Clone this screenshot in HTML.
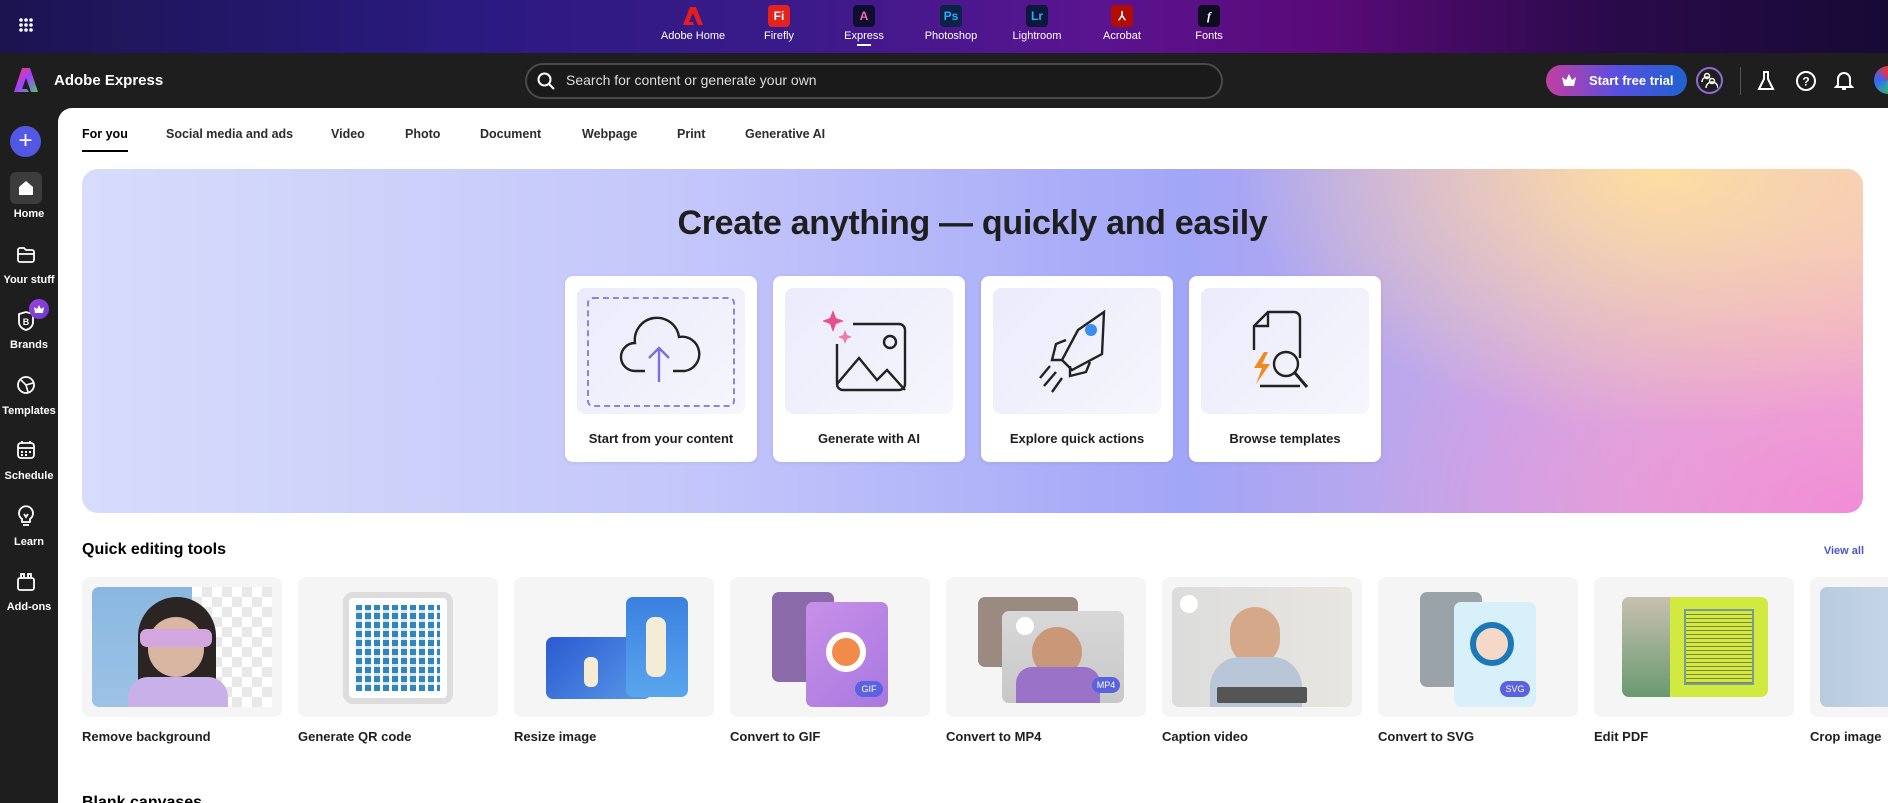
<!DOCTYPE html>
<html style="overflow:hidden;width:1888px;height:803px"><head><meta charset="utf-8"><style>
*{box-sizing:border-box;margin:0;padding:0}
body{width:1888px;height:803px;overflow:hidden;background:#1e1e1e;font-family:"Liberation Sans",sans-serif;position:relative}
.top{position:absolute;left:0;top:0;width:1888px;height:53px;background:linear-gradient(90deg,#1b1450 0%,#2a1a80 25%,#3b1a8a 42%,#5a1490 58%,#5a0a78 70%,#2a0a4a 85%,#170a35 100%)}
.app{position:absolute;top:5px;width:80px;text-align:center;color:#fff;font-size:11px}
.app .ic{width:22px;height:22px;margin:0 auto 3px;border-radius:4px;font-size:12px;font-weight:bold;line-height:22px}
.hdr{position:absolute;top:53px;left:0;width:1888px;height:55px;background:#1e1e1e}
.side{position:absolute;left:0;top:108px;width:58px;bottom:0}
.si{position:absolute;left:0;width:58px;text-align:center;color:#fff;font-size:11px;font-weight:bold}
.main{position:absolute;left:58px;top:108px;right:0;bottom:0;background:#fff;border-top-left-radius:14px;overflow:hidden}
.tab{position:absolute;top:19px;font-size:12.5px;color:#2c2c2c;font-weight:bold}
.hero{position:absolute;left:24px;top:61px;width:1781px;height:344px;border-radius:16px;overflow:hidden;
background:radial-gradient(ellipse 420px 260px at 1580px 0px,rgba(255,222,160,1),rgba(255,222,160,0) 100%),
radial-gradient(ellipse 500px 300px at 1781px 344px,rgba(240,140,216,1),rgba(240,140,216,0) 100%),
linear-gradient(90deg,#d7dcfb 0%,#c3c6fa 35%,#a2a6f7 62%,#c8a8e8 80%,#f0c0c8 100%)}
.card{position:absolute;top:107px;width:192px;height:186px;background:#fff;border-radius:8px;box-shadow:0 1px 4px rgba(0,0,0,.08)}
.card .im{position:absolute;left:12px;top:12px;width:168px;height:126px;border-radius:8px;background:linear-gradient(135deg,#ebebfb,#f6f6fd)}
.card .lb{position:absolute;left:0;right:0;top:155px;text-align:center;font-size:13px;font-weight:bold;color:#1e1e1e}
.tool{position:absolute;top:469px;width:200px}
.tool .bx{height:140px;background:#f5f5f5;border-radius:8px;position:relative;overflow:hidden}
.tool .lb{margin-top:12px;font-size:13px;font-weight:bold;color:#1e1e1e}
.pic{position:absolute;border-radius:7px}
</style></head><body>
<div class="top">
 <svg style="position:absolute;left:18px;top:17px" width="16" height="16"><g fill="#fff"><circle cx="3" cy="3" r="1.8"/><circle cx="8" cy="3" r="1.8"/><circle cx="13" cy="3" r="1.8"/><circle cx="3" cy="8" r="1.8"/><circle cx="8" cy="8" r="1.8"/><circle cx="13" cy="8" r="1.8"/><circle cx="3" cy="13" r="1.8"/><circle cx="8" cy="13" r="1.8"/><circle cx="13" cy="13" r="1.8"/></g></svg>
 <div class="app" style="left:653px"><div class="ic"><svg width="22" height="22"><path d="M8 2h6l7 18h-5L11 8 7 17h4l1 3H1z" fill="#e61d1d"/></svg></div>Adobe Home</div>
 <div class="app" style="left:739px"><div class="ic" style="background:#e4221e;color:#fff">Fi</div>Firefly</div>
 <div class="app" style="left:824px"><div class="ic" style="background:#0d0f2e;color:#f6a">A</div>Express<div style="width:14px;height:2px;background:#fff;margin:2px auto 0"></div></div>
 <div class="app" style="left:911px"><div class="ic" style="background:#0a2346;color:#31a8ff">Ps</div>Photoshop</div>
 <div class="app" style="left:997px"><div class="ic" style="background:#0b1a3a;color:#31a8ff">Lr</div>Lightroom</div>
 <div class="app" style="left:1082px"><div class="ic" style="background:#b30b00;color:#fff">⅄</div>Acrobat</div>
 <div class="app" style="left:1169px"><div class="ic" style="background:#0d0d20;color:#fff;font-style:italic;font-family:'Liberation Serif',serif">f</div>Fonts</div>
</div>
<div class="hdr">
 <svg style="position:absolute;left:13px;top:14px" width="26" height="26"><defs><linearGradient id="lg" x1="0" y1="0" x2="1" y2="1"><stop offset="0" stop-color="#ff3d5a"/><stop offset=".5" stop-color="#a040ff"/><stop offset="1" stop-color="#4cc86a"/></linearGradient></defs><path d="M9 1h8l8 24h-7l-5-14-4 11h5l2 3H1z" fill="url(#lg)"/></svg>
 <div style="position:absolute;left:54px;top:19px;color:#fff;font-size:15px;font-weight:bold">Adobe Express</div>
 <div style="position:absolute;left:525px;top:10px;width:698px;height:36px;border:2px solid #4a4a4a;border-radius:18px;background:#1a1a1a"></div>
 <svg style="position:absolute;left:537px;top:19px" width="18" height="18"><circle cx="7.5" cy="7.5" r="6" stroke="#fff" stroke-width="2" fill="none"/><path d="M12 12l5 5" stroke="#fff" stroke-width="2"/></svg>
 <div style="position:absolute;left:566px;top:19px;color:#ddd;font-size:14px">Search for content or generate your own</div>
 <div style="position:absolute;left:1546px;top:12px;width:141px;height:31px;border-radius:16px;background:linear-gradient(90deg,#c23fa0,#5a4ee0 50%,#1e62d0);color:#fff;font-size:13px;font-weight:bold;line-height:31px;padding-left:43px">Start free trial</div>
 <svg style="position:absolute;left:1561px;top:20px" width="16" height="14"><path d="M1 4l4 3 3-6 3 6 4-3-2 9H3z" fill="#fff"/></svg>
 <div style="position:absolute;left:1696px;top:14px;width:27px;height:27px;border-radius:50%;border:2px solid #8f6ad8"></div>
 <svg style="position:absolute;left:1701px;top:19px" width="17" height="17"><circle cx="6" cy="4" r="2.5" stroke="#fff" stroke-width="1.4" fill="none"/><circle cx="11" cy="9" r="2.5" stroke="#fff" stroke-width="1.4" fill="none"/><path d="M5 16a6 6 0 0112 0M1 10a5 5 0 018-4" stroke="#fff" stroke-width="1.4" fill="none"/></svg>
 <div style="position:absolute;left:1740px;top:14px;width:1px;height:28px;background:#555"></div>
 <svg style="position:absolute;left:1756px;top:17px" width="20" height="22"><path d="M7 2h6M8 2v7l-5 10h14l-5-10V2" stroke="#fff" stroke-width="2" fill="none"/></svg>
 <svg style="position:absolute;left:1795px;top:17px" width="22" height="22"><circle cx="11" cy="11" r="9" stroke="#fff" stroke-width="2" fill="none"/><text x="11" y="15.5" fill="#fff" font-size="12" font-weight="bold" text-anchor="middle" font-family="Liberation Sans">?</text></svg>
 <svg style="position:absolute;left:1834px;top:16px" width="20" height="22"><path d="M4 16V10a6 6 0 0112 0v6l2 2H2zM8 20h4" stroke="#fff" stroke-width="2" fill="none"/></svg>
 <div style="position:absolute;left:1874px;top:13px;width:28px;height:28px;border-radius:50%;background:conic-gradient(#e33,#f90,#3a8,#36f,#e33)"></div>
</div>
<div class="side">
 <div style="position:absolute;left:10px;top:18px;width:31px;height:31px;border-radius:50%;background:#5258e4;color:#fff;font-size:24px;line-height:29px;text-align:center">+</div>
 <div style="position:absolute;left:10px;top:64px;width:32px;height:32px;border-radius:6px;background:#3c3c3c"></div>
 <svg style="position:absolute;left:16px;top:70px" width="20" height="20"><path d="M3 9l7-6 7 6v8H3z" fill="#fff"/></svg>
 <div class="si" style="top:100px">Home</div>
 <svg style="position:absolute;left:16px;top:137px" width="20" height="20"><path d="M2 5a2 2 0 012-2h4l2 2h6a2 2 0 012 2v8a2 2 0 01-2 2H4a2 2 0 01-2-2zM2 9h16" stroke="#fff" stroke-width="1.8" fill="none"/></svg>
 <div class="si" style="top:166px">Your stuff</div>
 <svg style="position:absolute;left:16px;top:202px" width="20" height="22"><path d="M3 4l7-2 7 2v8c0 4-3 7-7 8-4-1-7-4-7-8z" stroke="#fff" stroke-width="1.8" fill="none"/><text x="10" y="15" fill="#fff" font-size="9" font-weight="bold" text-anchor="middle" font-family="Liberation Sans">B</text></svg>
 <div style="position:absolute;left:29px;top:191px;width:20px;height:20px;border-radius:50%;background:linear-gradient(135deg,#a040e0,#6a3ad0)"></div>
 <svg style="position:absolute;left:33px;top:196px" width="12" height="10"><path d="M1 3l3 2 2-4 2 4 3-2-1 6H2z" fill="#fff"/></svg>
 <div class="si" style="top:231px">Brands</div>
 <svg style="position:absolute;left:16px;top:267px" width="20" height="20"><circle cx="10" cy="10" r="8" stroke="#fff" stroke-width="1.8" fill="none"/><path d="M5 5l5 5 2 7M10 10l7-2" stroke="#fff" stroke-width="1.6" fill="none"/></svg>
 <div class="si" style="top:297px">Templates</div>
 <svg style="position:absolute;left:16px;top:332px" width="20" height="20"><rect x="2" y="3" width="16" height="15" rx="3" stroke="#fff" stroke-width="1.8" fill="none"/><path d="M2 8h16M6 1v3M14 1v3" stroke="#fff" stroke-width="1.8"/><g fill="#fff"><rect x="5" y="11" width="2" height="2"/><rect x="9" y="11" width="2" height="2"/><rect x="13" y="11" width="2" height="2"/><rect x="5" y="14" width="2" height="2"/><rect x="9" y="14" width="2" height="2"/></g></svg>
 <div class="si" style="top:362px">Schedule</div>
 <svg style="position:absolute;left:16px;top:397px" width="20" height="22"><path d="M6 14a7 7 0 118 0v3H6zM7 20h6M8 9l2 3 2-3" stroke="#fff" stroke-width="1.8" fill="none"/></svg>
 <div class="si" style="top:428px">Learn</div>
 <svg style="position:absolute;left:16px;top:464px" width="20" height="20"><rect x="2" y="6" width="16" height="12" rx="2" stroke="#fff" stroke-width="1.8" fill="none"/><path d="M5 6V2h3v4M12 6V2h3v4" stroke="#fff" stroke-width="1.8" fill="none"/></svg>
 <div class="si" style="top:493px">Add-ons</div>
</div>
<div class="main">
 <div class="tab" style="left:24px;color:#000">For you<div style="height:2px;background:#000;margin-top:9px"></div></div>
 <div class="tab" style="left:108px">Social media and ads</div>
 <div class="tab" style="left:273px">Video</div>
 <div class="tab" style="left:347px">Photo</div>
 <div class="tab" style="left:422px">Document</div>
 <div class="tab" style="left:524px">Webpage</div>
 <div class="tab" style="left:619px">Print</div>
 <div class="tab" style="left:687px">Generative AI</div>
 <div class="hero">
  <div style="position:absolute;left:0;right:0;top:35px;text-align:center;font-size:34px;font-weight:bold;color:#1e1e1e;letter-spacing:-0.3px">Create anything — quickly and easily</div>
  <div class="card" style="left:483px"><div class="im"><div style="position:absolute;left:10px;top:9px;width:148px;height:110px;border:2px dashed #8e84e0;border-radius:6px"></div>
   <svg style="position:absolute;left:38px;top:28px" width="92" height="70"><path d="M30 55H20a14 14 0 010-28 22 22 0 0144-6 16 16 0 016 34H58" stroke="#222" stroke-width="2.4" fill="none"/><path d="M44 66V32M34 42l10-10 10 10" stroke="#7d6de0" stroke-width="2.4" fill="none"/></svg></div><div class="lb">Start from your content</div></div>
  <div class="card" style="left:691px"><div class="im">
   <svg style="position:absolute;left:38px;top:22px" width="92" height="85"><path d="M30 14h46a6 6 0 016 6v54a6 6 0 01-6 6H20a6 6 0 01-6-6V34" stroke="#222" stroke-width="2.4" fill="none"/><path d="M14 74l22-26 18 22 10-10 18 20" stroke="#222" stroke-width="2.4" fill="none"/><circle cx="67" cy="32" r="6" stroke="#222" stroke-width="2.4" fill="none"/><path d="M10 0l3 8 8 3-8 3-3 8-3-8-8-3 8-3z" fill="#e8508a"/><path d="M22 20l2 5 5 2-5 2-2 5-2-5-5-2 5-2z" fill="#f07aa8"/></svg></div><div class="lb">Generate with AI</div></div>
  <div class="card" style="left:899px"><div class="im">
   <svg style="position:absolute;left:45px;top:20px" width="80" height="90"><path d="M66 4L40 22 24 52l10 10 30-16zM28 32l-10 4-4 16 10 0M52 54l-4 10-16 4 0-10" stroke="#222" stroke-width="2.4" fill="none"/><circle cx="53" cy="22" r="6" fill="#3a8ef0"/><path d="M18 64L6 78M24 70L14 84M12 58L2 70" stroke="#222" stroke-width="2.4"/></svg></div><div class="lb">Explore quick actions</div></div>
  <div class="card" style="left:1107px"><div class="im">
   <svg style="position:absolute;left:45px;top:20px" width="80" height="90"><path d="M54 50V10a6 6 0 00-6-6H22L8 18v24M8 18h14V4M14 78h40" stroke="#222" stroke-width="2.4" fill="none"/><circle cx="40" cy="56" r="12" stroke="#222" stroke-width="2.4" fill="none"/><path d="M49 65l12 14" stroke="#222" stroke-width="3"/><path d="M18 44l-10 16h8l-6 16 14-20h-8l6-12z" fill="#f08a1e"/></svg></div><div class="lb">Browse templates</div></div>
 </div>
 <div style="position:absolute;left:24px;top:433px;font-size:16px;font-weight:bold;color:#000">Quick editing tools</div>
 <div style="position:absolute;right:24px;top:437px;font-size:11px;font-weight:bold;color:#4b55c8">View all</div>
 <div class="tool" style="left:24px"><div class="bx"><div class="pic" style="left:10px;top:10px;width:100px;height:120px;background:linear-gradient(#8ab8e0,#9cc2e6);border-radius:7px 0 0 7px"></div><div class="pic" style="left:110px;top:10px;width:80px;height:120px;background:repeating-conic-gradient(#e8e8e8 0 25%,#fff 0 50%) 0 0/20px 20px;border-radius:0"></div><div class="pic" style="left:56px;top:20px;width:78px;height:110px;border-radius:40px 40px 0 0;background:#2a2422"></div><div class="pic" style="left:66px;top:40px;width:56px;height:60px;border-radius:28px;background:#d8b6a2"></div><div class="pic" style="left:58px;top:52px;width:72px;height:18px;background:#d4a6e0"></div><div class="pic" style="left:46px;top:100px;width:100px;height:30px;border-radius:20px 20px 0 0;background:#c9b0e8"></div></div><div class="lb">Remove background</div></div>
 <div class="tool" style="left:240px"><div class="bx"><div class="pic" style="left:45px;top:15px;width:110px;height:112px;background:#fff;border:6px solid #ddd;border-radius:10px"></div><div class="pic" style="left:58px;top:28px;width:84px;height:86px;border-radius:0;background:repeating-linear-gradient(90deg,#1a78b8 0 6px,#fff 6px 9px),#1a78b8;opacity:.9"></div><div class="pic" style="left:58px;top:28px;width:84px;height:86px;border-radius:0;background:repeating-linear-gradient(0deg,transparent 0 6px,rgba(255,255,255,.8) 6px 9px)"></div></div><div class="lb">Generate QR code</div></div>
 <div class="tool" style="left:456px"><div class="bx"><div class="pic" style="left:32px;top:60px;width:105px;height:62px;background:linear-gradient(135deg,#2a5ad0,#5a9ae8)"></div><div class="pic" style="left:112px;top:20px;width:62px;height:100px;background:linear-gradient(#3a80e0,#5aa6ee)"></div><div class="pic" style="left:132px;top:40px;width:20px;height:60px;background:#f4ecd4;border-radius:8px"></div><div class="pic" style="left:70px;top:80px;width:14px;height:30px;background:#f4ecd4;border-radius:6px"></div></div><div class="lb">Resize image</div></div>
 <div class="tool" style="left:672px"><div class="bx"><div class="pic" style="left:42px;top:15px;width:62px;height:90px;background:#8a6aa8"></div><div class="pic" style="left:76px;top:25px;width:82px;height:105px;background:linear-gradient(135deg,#c890e8,#a878e0)"></div><div class="pic" style="left:96px;top:55px;width:40px;height:40px;border-radius:50%;background:#f28a4a;border:6px solid #fff"></div><div class="pic" style="left:125px;top:104px;width:28px;height:16px;border-radius:8px;background:#5a62e0;color:#fff;font-size:9px;text-align:center;line-height:16px">GIF</div></div><div class="lb">Convert to GIF</div></div>
 <div class="tool" style="left:888px"><div class="bx"><div class="pic" style="left:32px;top:20px;width:100px;height:70px;background:#9a8a80"></div><div class="pic" style="left:56px;top:34px;width:122px;height:92px;background:linear-gradient(#d8d8d8,#c8c8c8)"></div><div class="pic" style="left:86px;top:50px;width:50px;height:50px;border-radius:50%;background:#c89878"></div><div class="pic" style="left:70px;top:90px;width:84px;height:36px;border-radius:16px 16px 0 0;background:#9a72c8"></div><div class="pic" style="left:70px;top:40px;width:18px;height:18px;border-radius:50%;background:#fff"></div><div class="pic" style="left:146px;top:100px;width:28px;height:16px;border-radius:8px;background:#5a62e0;color:#fff;font-size:9px;text-align:center;line-height:16px">MP4</div></div><div class="lb">Convert to MP4</div></div>
 <div class="tool" style="left:1104px"><div class="bx"><div class="pic" style="left:10px;top:10px;width:180px;height:120px;background:linear-gradient(90deg,#dcdcdc,#e8e6e0)"></div><div class="pic" style="left:68px;top:30px;width:50px;height:58px;border-radius:25px;background:#d4a888"></div><div class="pic" style="left:48px;top:80px;width:92px;height:50px;border-radius:30px 30px 0 0;background:#b8c6d8"></div><div class="pic" style="left:55px;top:110px;width:90px;height:16px;border-radius:2px;background:#555"></div><div class="pic" style="left:18px;top:18px;width:18px;height:18px;border-radius:50%;background:#fff"></div></div><div class="lb">Caption video</div></div>
 <div class="tool" style="left:1320px"><div class="bx"><div class="pic" style="left:42px;top:15px;width:62px;height:95px;background:#9aa4a8"></div><div class="pic" style="left:76px;top:25px;width:82px;height:105px;background:#d8f0fa"></div><div class="pic" style="left:92px;top:45px;width:44px;height:44px;border-radius:50%;border:6px solid #1a78b8;background:#f4d8c8"></div><div class="pic" style="left:122px;top:104px;width:30px;height:16px;border-radius:8px;background:#5a62e0;color:#fff;font-size:9px;text-align:center;line-height:16px">SVG</div></div><div class="lb">Convert to SVG</div></div>
 <div class="tool" style="left:1536px"><div class="bx"><div class="pic" style="left:28px;top:20px;width:48px;height:100px;background:linear-gradient(#c8c0b0,#6a9a70);border-radius:7px 0 0 7px"></div><div class="pic" style="left:76px;top:20px;width:98px;height:100px;background:#d2ea40;border-radius:0 7px 7px 0"></div><div class="pic" style="left:90px;top:32px;width:70px;height:76px;border:2px solid #3a6ad0;border-radius:0;background:repeating-linear-gradient(0deg,#444 0 1px,transparent 1px 4px);opacity:.6"></div></div><div class="lb">Edit PDF</div></div>
 <div class="tool" style="left:1752px"><div class="bx"><div class="pic" style="left:10px;top:10px;width:190px;height:120px;background:linear-gradient(90deg,#b8cce0,#d8e4f0)"></div></div><div class="lb">Crop image</div></div>
 <div style="position:absolute;left:24px;top:686px;font-size:16px;font-weight:bold;color:#000">Blank canvases</div>
</div>
</body></html>
